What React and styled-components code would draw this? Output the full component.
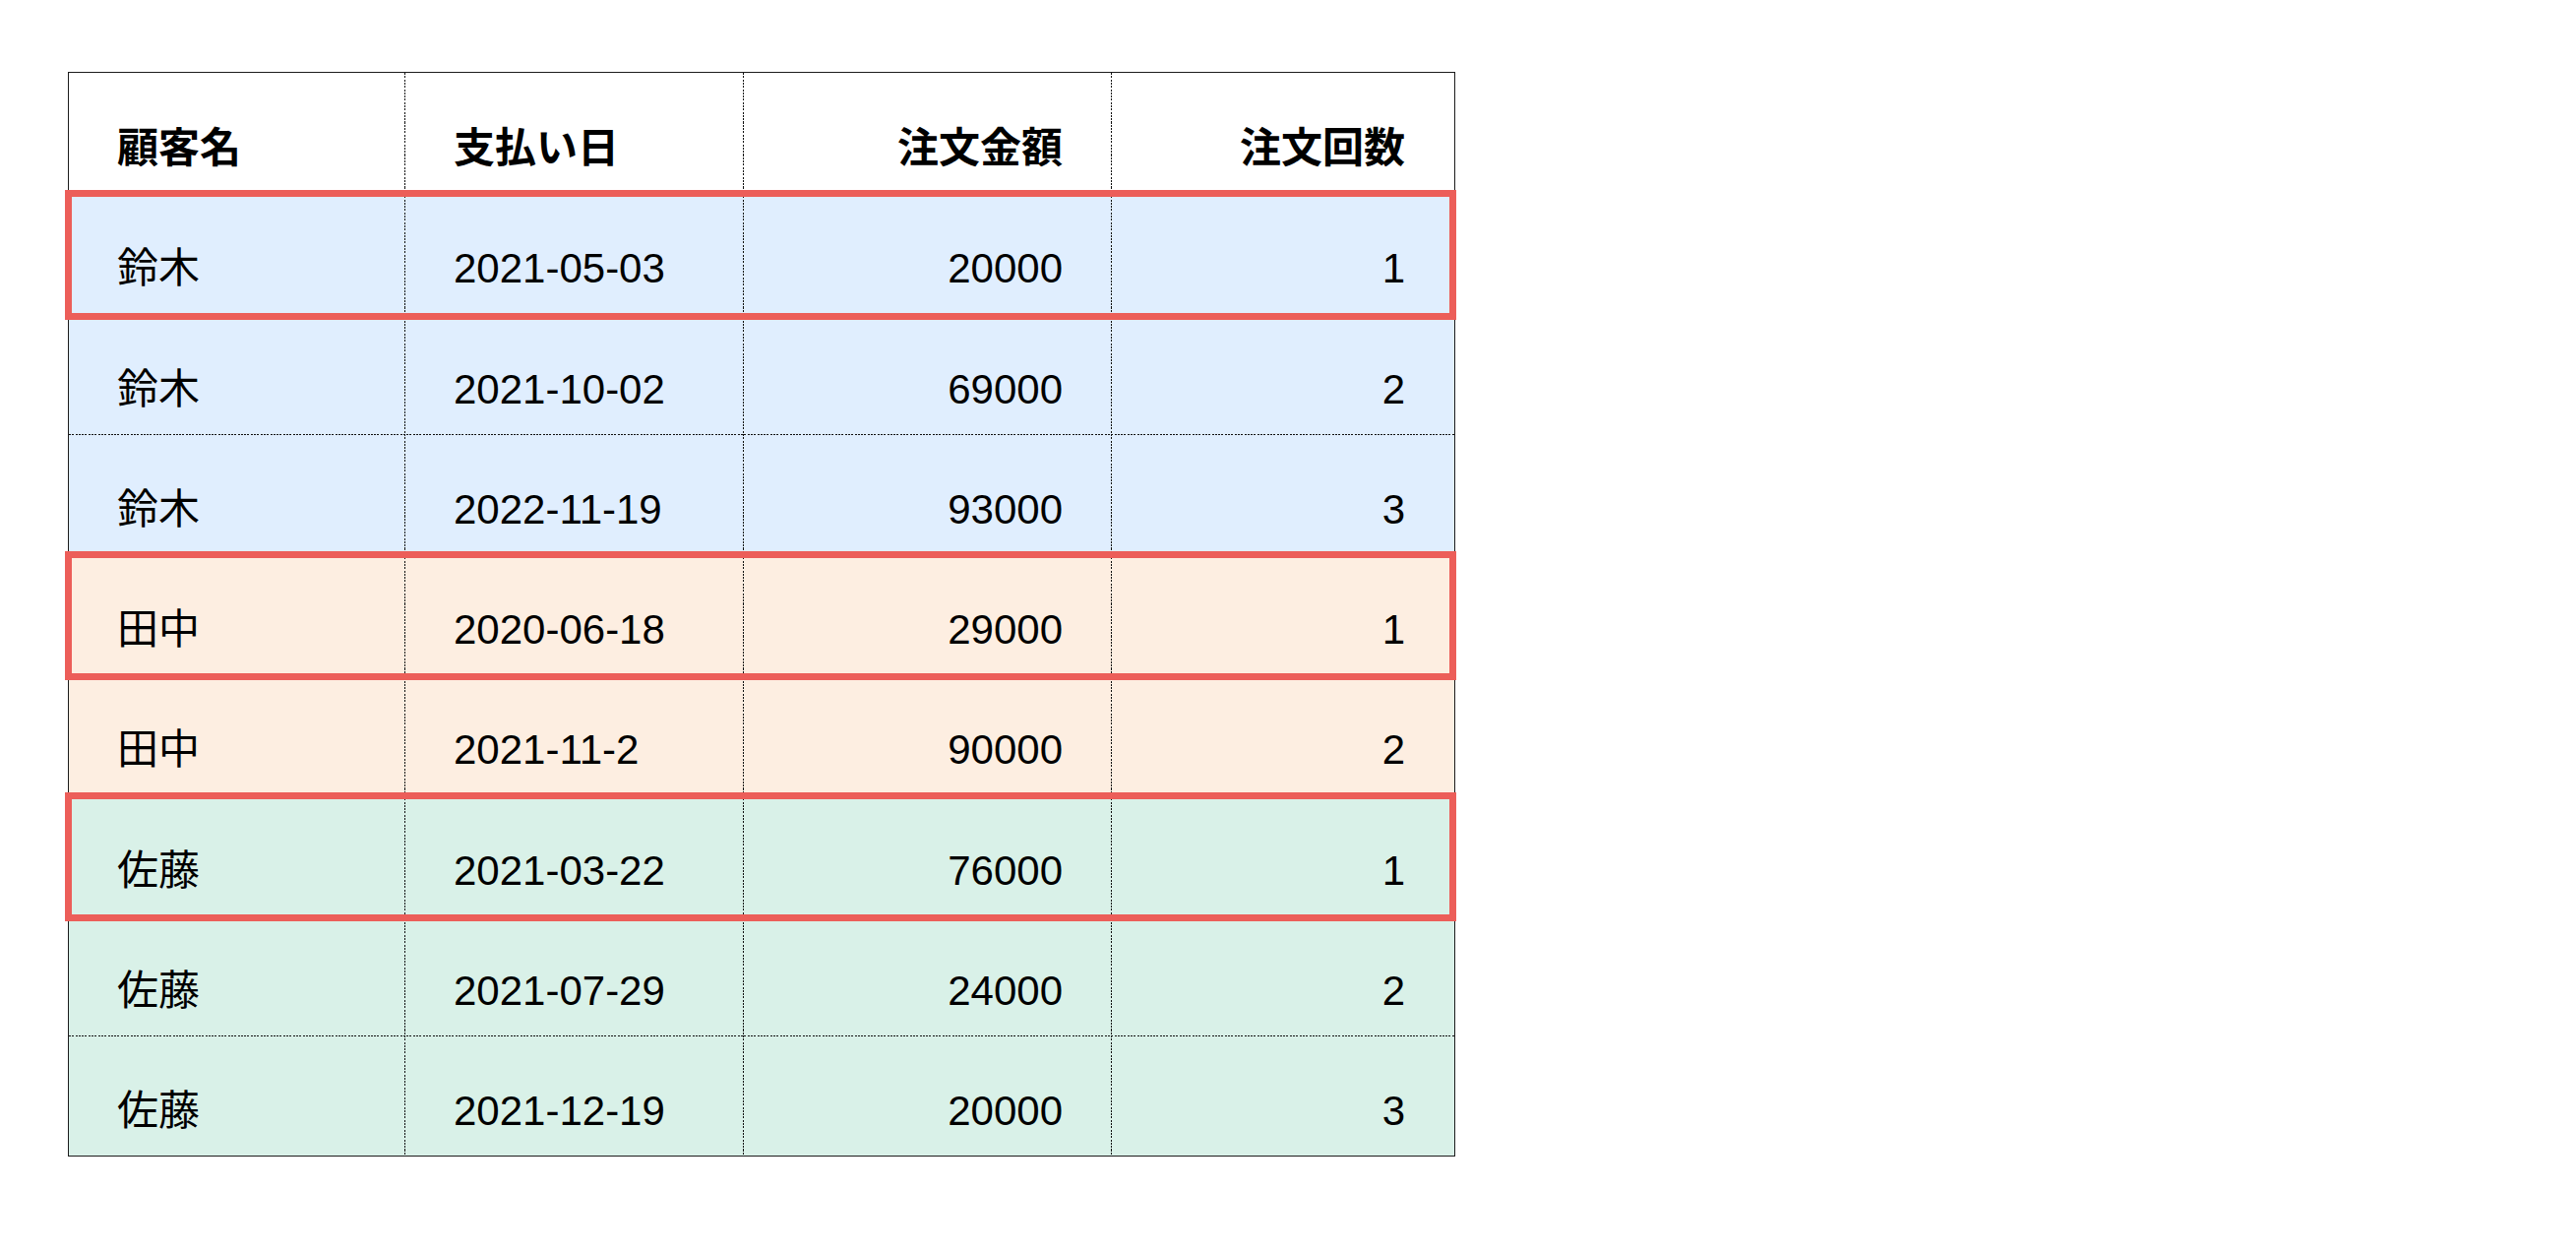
import React from "react";
import styled, { createGlobalStyle, css } from "styled-components";

const GlobalStyle = createGlobalStyle`
  html, body {
    margin: 0;
    padding: 0;
    background: #ffffff;
  }
  body {
    font-family: "Liberation Sans", "Noto Sans CJK JP", sans-serif;
    color: #000;
  }
`;

const tones = {
  head: "#ffffff",
  blue: "#e0eefe",
  peach: "#fdeee1",
  green: "#d9f1e8",
};

const dashV = "repeating-linear-gradient(to bottom, #111 0 2px, transparent 2px 3.3px)";
const dashH = "repeating-linear-gradient(to right, #111 0 2px, transparent 2px 3.3px)";

const Page = styled.div`
  padding: 73px 0 0 69px;
  min-height: 1272px;
  box-sizing: border-box;
`;

const Table = styled.div`
  display: inline-flex;
  flex-direction: column;
  border: 1px solid #1c1c1c;
`;

const Row = styled.div`
  position: relative;
  display: grid;
  grid-template-columns: 342px 344px 374px 348px;
  height: 122.25px;
  background-color: ${(p) => tones[p.$tone]};
  ${(p) =>
    p.$divided &&
    css`
      background-image: ${dashH};
      background-size: 100% 1px;
      background-position: left top;
      background-repeat: no-repeat;
    `}

  ${(p) =>
    p.$marked &&
    css`
      &::after {
        content: "";
        position: absolute;
        top: -3px;
        bottom: -6px;
        left: -4px;
        right: -2px;
        border: 7px solid #ec5e59;
        z-index: 1;
        pointer-events: none;
      }
    `}
`;

const Cell = styled.div`
  box-sizing: border-box;
  padding: 56px 50px 0 49px;
  font-size: 42px;
  line-height: 42px;
  font-weight: ${(p) => (p.$head ? 700 : 400)};
  text-align: ${(p) => (p.$right ? "right" : "left")};
  white-space: nowrap;
  ${(p) =>
    !p.$last &&
    css`
      background-image: ${dashV};
      background-size: 1px 100%;
      background-position: right top;
      background-repeat: no-repeat;
    `}
`;

const headers = ["顧客名", "支払い日", "注文金額", "注文回数"];

const rows = [
  { name: "鈴木", date: "2021-05-03", amount: "20000", count: "1", tone: "blue", marked: true },
  { name: "鈴木", date: "2021-10-02", amount: "69000", count: "2", tone: "blue" },
  { name: "鈴木", date: "2022-11-19", amount: "93000", count: "3", tone: "blue" },
  { name: "田中", date: "2020-06-18", amount: "29000", count: "1", tone: "peach", marked: true },
  { name: "田中", date: "2021-11-2", amount: "90000", count: "2", tone: "peach" },
  { name: "佐藤", date: "2021-03-22", amount: "76000", count: "1", tone: "green", marked: true },
  { name: "佐藤", date: "2021-07-29", amount: "24000", count: "2", tone: "green" },
  { name: "佐藤", date: "2021-12-19", amount: "20000", count: "3", tone: "green" },
];

export default function App() {
  return (
    <>
      <GlobalStyle />
      <Page>
        <Table>
          <Row $tone="head">
            {headers.map((h, i) => (
              <Cell key={h} $head $right={i >= 2} $last={i === 3}>
                {h}
              </Cell>
            ))}
          </Row>
          {rows.map((r, i) => (
            <Row key={i} $tone={r.tone} $divided $marked={r.marked}>
              <Cell>{r.name}</Cell>
              <Cell>{r.date}</Cell>
              <Cell $right>{r.amount}</Cell>
              <Cell $right $last>
                {r.count}
              </Cell>
            </Row>
          ))}
        </Table>
      </Page>
    </>
  );
}
